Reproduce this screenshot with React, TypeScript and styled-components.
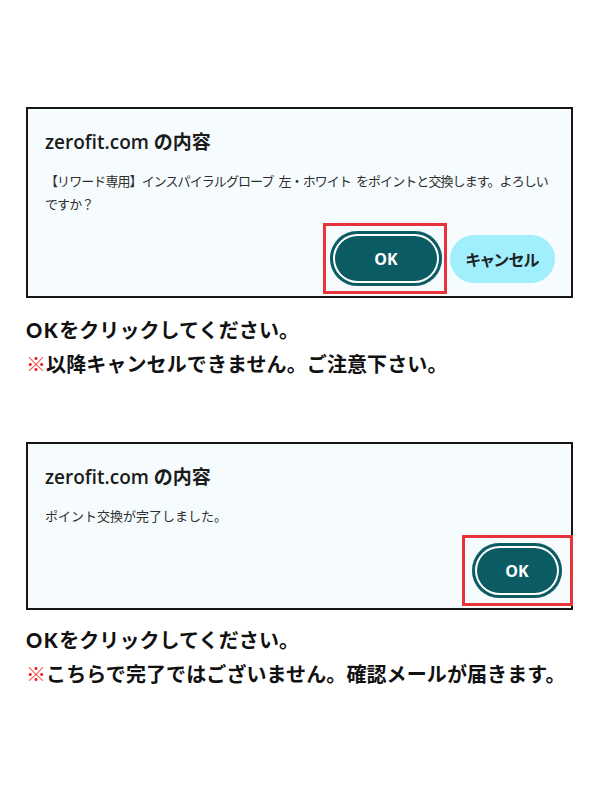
import styled, { createGlobalStyle } from 'styled-components';

const GlobalStyle = createGlobalStyle`
  body {
    margin: 0;
    background: #ffffff;
  }
`;

type Step = {
  lines: string[];
  tracking: number;
  okWidth: number;
  okPadding: string;
  pull: number;
  cancel: boolean;
  note: string;
  top: number;
  noteTop: number;
};

const steps: Step[] = [
  {
    lines: [
      '【リワード専用】インスパイラルグローブ 左・ホワイト をポイントと交換します。よろしい',
      'ですか？',
    ],
    tracking: -0.92,
    okWidth: 112,
    okPadding: '5px 2px 5px 4px',
    pull: 0,
    cancel: true,
    note: '以降キャンセルできません。ご注意下さい。',
    top: 107,
    noteTop: 15,
  },
  {
    lines: ['ポイント交換が完了しました。'],
    tracking: 0,
    okWidth: 90,
    okPadding: '5px 8px 5px 7px',
    pull: -18,
    cancel: false,
    note: 'こちらで完了ではございません。確認メールが届きます。',
    top: 61,
    noteTop: 13,
  },
];

const App = () => {
  return (
    <Page>
      <GlobalStyle />
      {steps.map((s, i) => (
        <Block key={i} $top={s.top}>
          <Dialog>
            <Title>zerofit.com の内容</Title>
            <Message $tracking={s.tracking}>
              {s.lines.map((l) => (
                <MessageLine key={l}>{l}</MessageLine>
              ))}
            </Message>
            <Actions>
              <Highlight $pad={s.okPadding} $pull={s.pull}>
                <OkButton $w={s.okWidth}>OK</OkButton>
              </Highlight>
              {s.cancel && <CancelButton>キャンセル</CancelButton>}
            </Actions>
          </Dialog>
          <Notes $top={s.noteTop}>
            <NoteLine>
              <Latin>OK</Latin>をクリックしてください。
            </NoteLine>
            <NoteLine>
              <Mark>※</Mark>
              {s.note}
            </NoteLine>
          </Notes>
        </Block>
      ))}
    </Page>
  );
};

export default App;

const Page = styled.main`
  width: 600px;
  height: 800px;
  box-sizing: border-box;
  padding: 0 0 0 26px;
  overflow: hidden;
  font-family: 'Noto Sans CJK JP', sans-serif;
`;

const Block = styled.div<{ $top: number }>`
  padding-top: ${(p) => p.$top}px;
`;

const Dialog = styled.section`
  width: 547px;
  box-sizing: border-box;
  border: 2px solid #171717;
  background: #f6fcfd;
  padding: 21px 16px 2px 17px;
`;

const Title = styled.h2`
  margin: 0;
  font-family: 'Open Sans', 'Noto Sans CJK JP', sans-serif;
  font-weight: 600;
  font-size: 19px;
  line-height: 24px;
  color: #1b1b1b;
`;

const Message = styled.div<{ $tracking: number }>`
  margin: 14.5px 0 0;
  font-family: 'Noto Sans CJK JP', sans-serif;
  font-size: 13px;
  line-height: 23px;
  letter-spacing: ${(p) => p.$tracking}px;
  word-spacing: 3px;
  color: #2e2e2e;
`;

const MessageLine = styled.p`
  margin: 0;
  white-space: nowrap;
`;

const Actions = styled.div`
  display: flex;
  justify-content: flex-end;
  align-items: center;
  gap: 3px;
  margin-top: 8.5px;
`;

const Highlight = styled.div<{ $pad: string; $pull: number }>`
  border: 3px solid #e8333b;
  padding: ${(p) => p.$pad};
  margin-right: ${(p) => p.$pull}px;
  position: relative;
`;

const OkButton = styled.button<{ $w: number }>`
  display: block;
  width: ${(p) => p.$w}px;
  height: 55px;
  border: none;
  border-radius: 28px;
  background: #0b5b63;
  box-shadow: inset 0 0 0 3px #0b5b63, inset 0 0 0 5px #ffffff;
  color: #ffffff;
  font-family: 'Open Sans', sans-serif;
  font-weight: 700;
  font-size: 16px;
`;

const CancelButton = styled.button`
  width: 105px;
  height: 48px;
  border: none;
  border-radius: 24px;
  background: #a1effc;
  color: #1c2626;
  font-family: 'Noto Sans CJK JP', sans-serif;
  font-weight: 700;
  font-size: 16px;
  font-feature-settings: 'palt';
`;

const Notes = styled.div<{ $top: number }>`
  margin-top: ${(p) => p.$top}px;
`;

const NoteLine = styled.p`
  margin: 0;
  font-weight: 700;
  font-size: 20px;
  line-height: 34px;
  letter-spacing: 0.1px;
  color: #111111;
  white-space: nowrap;
`;

const Latin = styled.span`
  font-family: 'Lato', 'Noto Sans CJK JP', sans-serif;
  font-weight: 900;
  letter-spacing: 1.5px;
`;

const Mark = styled.span`
  color: #f21c1c;
`;
